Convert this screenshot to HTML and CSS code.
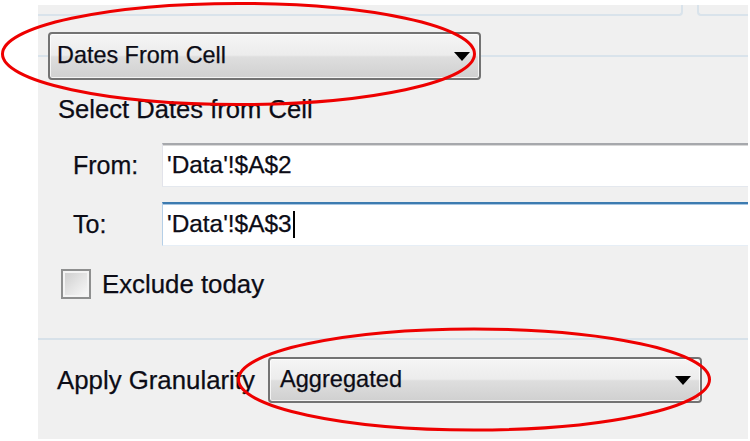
FILE: index.html
```html
<!DOCTYPE html>
<html>
<head>
<meta charset="utf-8">
<link rel="stylesheet" href="styles.css">
</head>
<body>
<div class="page">
  <div class="panel">
    <div class="tabs">
      <div class="tab tab-main"></div>
      <div class="tab tab-side"></div>
    </div>

    <div class="combo-row">
      <div class="rule rule-short"></div>
      <div class="combo combo-wide">
        <span class="combo-text">Dates From Cell</span>
        <svg class="arrow" width="16" height="9" viewBox="0 0 16 9"><polygon points="0,0 16,0 8,9" fill="#000"/></svg>
      </div>
      <div class="rule rule-fill"></div>
    </div>

    <div class="section-title">Select Dates from Cell</div>

    <div class="field-row first">
      <span class="field-label">From:</span>
      <div class="input input-plain"><span class="input-text">'Data'!$A$2</span></div>
    </div>
    <div class="field-row">
      <span class="field-label">To:</span>
      <div class="input input-focus"><span class="input-text">'Data'!$A$3</span><span class="caret"></span></div>
    </div>

    <div class="check-row">
      <span class="checkbox"><span class="checkbox-inner"></span></span>
      <span class="check-label">Exclude today</span>
    </div>

    <div class="separator"></div>

    <div class="gran-row">
      <span class="gran-label">Apply Granularity</span>
      <div class="combo combo-gran">
        <span class="combo-text">Aggregated</span>
        <svg class="arrow" width="16" height="9" viewBox="0 0 16 9"><polygon points="0,0 16,0 8,9" fill="#000"/></svg>
      </div>
    </div>
  </div>

  <svg class="marks" width="750" height="441" viewBox="0 0 750 441">
    <ellipse cx="238.5" cy="54" rx="236" ry="50.5" fill="none" stroke="#ee0000" stroke-width="3"/>
    <ellipse cx="474" cy="379.5" rx="235.5" ry="50.5" fill="none" stroke="#ee0000" stroke-width="3"/>
  </svg>
</div>
</body>
</html>
```

FILE: styles.css
```css
html, body {
  margin: 0;
  padding: 0;
  background: #ffffff;
}

.page {
  position: relative;
  width: 750px;
  height: 441px;
  overflow: hidden;
  font-family: "Liberation Sans", Arial, sans-serif;
  font-size: 25px;
  color: #0c0c16;
  -webkit-text-stroke: 0.25px #0c0c16;
}

.panel {
  margin: 5px 0 0 38px;
  width: 710px;
  height: 434px;
  background: #f0f0f0;
  display: flex;
  flex-direction: column;
}

/* tab strip bottoms */
.tabs {
  display: flex;
  height: 11px;
  gap: 14px;
}
.tab {
  height: 9px;
  border-bottom: 2px solid #d9e3eb;
}
.tab-main {
  width: 643px;
  border-right: 2px solid #d9e3eb;
  border-bottom-right-radius: 4px;
}
.tab-side {
  flex: 1;
  border-left: 2px solid #d9e3eb;
  border-bottom-left-radius: 4px;
}

/* combo rows */
.combo-row {
  display: flex;
  align-items: center;
  margin-top: 16px;
  height: 48px;
}
.rule {
  height: 2px;
  background: #d9e3eb;
}
.rule-short { width: 10px; }
.rule-fill { flex: 1; }

.combo {
  box-sizing: border-box;
  height: 48px;
  border: 2px solid #737373;
  border-radius: 4px;
  background: linear-gradient(#f5f5f5 0%, #ececec 48%, #dedede 52%, #d0d0d0 100%);
  box-shadow: inset 0 0 0 1px rgba(255,255,255,0.75);
  display: flex;
  align-items: center;
  justify-content: space-between;
  padding: 0 9px 0 7px;
}
.combo-wide { width: 433px; }
.combo-text {
  font-size: 23.4px;
  line-height: 1;
  padding-bottom: 1px;
}
.arrow { display: block; }

.section-title {
  margin-top: 14px;
  margin-left: 20px;
  height: 30px;
  line-height: 30px;
  font-size: 25.6px;
}

.field-row {
  display: flex;
  align-items: center;
  margin-top: 15px;
  height: 44px;
}
.field-row.first { margin-top: 19px; }

.field-label {
  width: 124px;
  padding-left: 35px;
  box-sizing: border-box;
}

.input {
  box-sizing: border-box;
  flex: 1;
  height: 44px;
  background: #ffffff;
  display: flex;
  align-items: center;
  padding-left: 4px;
}
.input-plain {
  border-top: 2px solid #a6a8ac;
  border-left: 1px solid #e2e3ea;
  border-bottom: 1px solid #e4e8ee;
  box-shadow: inset 0 1px 0 #d8d8d8;
}
.input-focus {
  border-top: 2px solid #3d7bb0;
  border-left: 1px solid #b5cfe7;
  border-bottom: 1px solid #e6eef6;
  box-shadow: inset 0 1px 0 #a8c6e2;
}
.input-text {
  line-height: 1;
  font-size: 24.4px;
}
.caret {
  display: inline-block;
  width: 2px;
  height: 27px;
  background: #000;
  margin-left: 1px;
}

.check-row {
  display: flex;
  align-items: center;
  margin-top: 23px;
  height: 30px;
  padding-left: 23px;
}
.checkbox {
  box-sizing: border-box;
  width: 30px;
  height: 30px;
  border: 2px solid #8e8f8f;
  padding: 2px;
  background: #f4f4f4;
  display: flex;
}
.checkbox-inner {
  flex: 1;
  background: linear-gradient(135deg, #cfcfcf 0%, #e4e4e4 50%, #f7f7f7 100%);
}
.check-label {
  margin-left: 11px;
  font-size: 25.8px;
}

.separator {
  margin-top: 39px;
  height: 2px;
  background: #d7e1e9;
}

.gran-row {
  display: flex;
  align-items: center;
  margin-top: 17px;
  height: 46px;
  padding-left: 19px;
}
.gran-label {
  width: 211px;
  font-size: 25.8px;
  white-space: nowrap;
}
.combo-gran {
  width: 434px;
  height: 46px;
  padding-left: 10px;
}
.combo-gran .combo-text {
  font-size: 23.6px;
}

.marks {
  position: absolute;
  left: 0;
  top: 0;
  pointer-events: none;
}
```
